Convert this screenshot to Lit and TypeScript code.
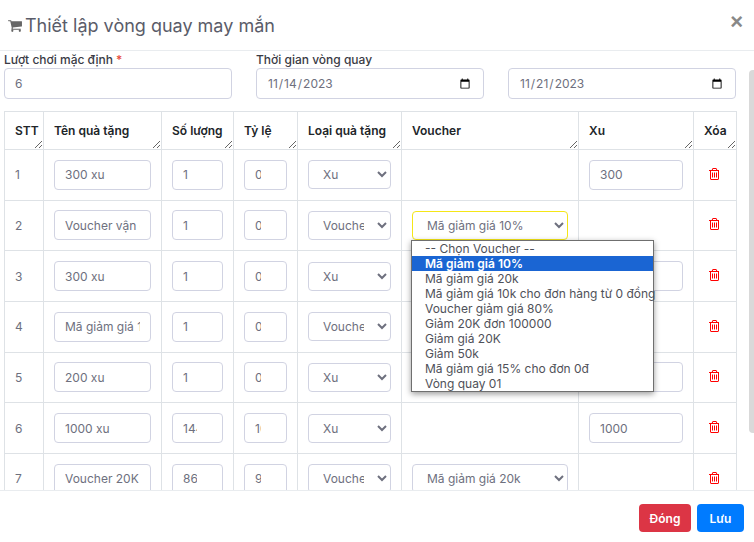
import { LitElement, html, css, svg } from 'lit';
import { customElement } from 'lit/decorators.js';

const cartIcon = html`<svg class="cart" viewBox="0 0 1664 1792" aria-hidden="true"><path fill="currentColor" d="M640 1536q0 52-38 90t-90 38-90-38-38-90 38-90 90-38 90 38 38 90zm896 0q0 52-38 90t-90 38-90-38-38-90 38-90 90-38 90 38 38 90zm128-1088v512q0 24-16.5 42.5t-40.5 21.5l-1044 122q13 60 13 70 0 16-24 64h920q26 0 45 19t19 45-19 45-45 19h-1024q-26 0-45-19t-19-45q0-11 8-31.5t16-36 21.5-40 15.5-29.5l-177-823h-204q-26 0-45-19t-19-45 19-45 45-19h256q16 0 28.5 6.5t19.5 15.5 13 24.5 8 26 5.5 29.5 4.5 26h1201q26 0 45 19t19 45z"/></svg>`;

const trashPath = svg`<path fill="currentColor" d="M704 736v576q0 14-9 23t-23 9h-64q-14 0-23-9t-9-23v-576q0-14 9-23t23-9h64q14 0 23 9t9 23zm256 0v576q0 14-9 23t-23 9h-64q-14 0-23-9t-9-23v-576q0-14 9-23t23-9h64q14 0 23 9t9 23zm256 0v576q0 14-9 23t-23 9h-64q-14 0-23-9t-9-23v-576q0-14 9-23t23-9h64q14 0 23 9t9 23zm128 724v-948h-896v948q0 22 7 40.5t14.5 27 10.5 8.5h832q3 0 10.5-8.5t14.5-27 7-40.5zm-672-1076h448l-48-117q-7-9-17-11h-317q-10 2-17 11zm928 32v64q0 14-9 23t-23 9h-96v948q0 83-47 143.5t-113 60.5h-832q-66 0-113-58.5t-47-141.5v-952h-96q-14 0-23-9t-9-23v-64q0-14 9-23t23-9h309l70-167q15-37 54-63t79-26h320q40 0 79 26t54 63l70 167h309q14 0 23 9t9 23z"/>`;

const vouchers = [
  '-- Chọn Voucher --',
  'Mã giảm giá 10%',
  'Mã giảm giá 20k',
  'Mã giảm giá 10k cho đơn hàng từ 0 đồng',
  'Voucher giảm giá 80%',
  'Giảm 20K đơn 100000',
  'Giảm giá 20K',
  'Giảm 50k',
  'Mã giảm giá 15% cho đơn 0đ',
  'Vòng quay 01',
];

const columns = ['STT', 'Tên quà tặng', 'Số lượng', 'Tỷ lệ', 'Loại quà tặng', 'Voucher', 'Xu', 'Xóa'];

const rows = [
  { name: '300 xu', qty: 1, rate: 0, type: 'Xu', voucher: '', xu: '300' },
  { name: 'Voucher vận chuyển', qty: 1, rate: 0, type: 'Voucher', voucher: 'Mã giảm giá 10%', xu: '', open: true },
  { name: '300 xu', qty: 1, rate: 0, type: 'Xu', voucher: '', xu: '300' },
  { name: 'Mã giảm giá 10k', qty: 1, rate: 0, type: 'Voucher', voucher: 'Mã giảm giá 10k cho đơn hàng từ 0 đồng', xu: '' },
  { name: '200 xu', qty: 1, rate: 0, type: 'Xu', voucher: '', xu: '200' },
  { name: '1000 xu', qty: 144, rate: 10, type: 'Xu', voucher: '', xu: '1000' },
  { name: 'Voucher 20K', qty: 86, rate: 90, type: 'Voucher', voucher: 'Mã giảm giá 20k', xu: '' },
];

@customElement('app-root')
export class AppRoot extends LitElement {
  static override styles = css`
    :host {
      display: block;
      position: relative;
      width: 754px;
      height: 542px;
      overflow: hidden;
      background: #fff;
      font-family: Inter, 'Noto Sans', sans-serif;
      font-size: 12px;
      color: #6e707e;
    }
    .modal {
      display: flex;
      flex-direction: column;
      height: 100%;
    }
    .head {
      display: flex;
      align-items: center;
      justify-content: space-between;
      flex: none;
      height: 51px;
      box-sizing: border-box;
      padding: 0 11px 0 8px;
      border-bottom: 1px solid #e9ecef;
    }
    .title {
      display: flex;
      align-items: center;
      gap: 3px;
      margin: 0;
      font-size: 18px;
      font-weight: 400;
      color: #5a5c69;
    }
    .cart {
      width: 14px;
      height: 15px;
      color: #666;
    }
    .close {
      border: 0;
      padding: 0;
      background: none;
      font-family: 'Liberation Sans', sans-serif;
      font-size: 22px;
      font-weight: 700;
      line-height: 1;
      color: #888;
      margin-top: -6px;
    }
    .body {
      flex: 1;
      min-height: 0;
      overflow: hidden;
      padding: 0 18px 0 4px;
    }
    .fields {
      display: grid;
      grid-template-columns: repeat(3, 228px);
      column-gap: 24px;
      align-items: end;
      margin-bottom: 12px;
    }
    label {
      display: block;
      height: 17px;
      font-weight: 500;
      line-height: 17px;
      color: #3a3b45;
    }
    .req {
      color: #e74a3b;
    }
    input,
    select {
      box-sizing: border-box;
      width: 100%;
      height: 30px;
      border: 1px solid #d1d3e2;
      border-radius: 4px;
      background: #fff;
      font: inherit;
      color: #6e707e;
      padding: 0 10px;
      outline: none;
    }
    .fields input {
      height: 31px;
    }
    select {
      height: 29px;
      padding: 0 10px;
      vertical-align: bottom;
    }
    select.focus {
      border-color: #f5e617;
    }
    table {
      width: 732px;
      table-layout: fixed;
      border-collapse: collapse;
    }
    .c0 { width: 39px; }
    .c1 { width: 118px; }
    .c2 { width: 72px; }
    .c3 { width: 64px; }
    .c4 { width: 104px; }
    .c5 { width: 177px; }
    .c6 { width: 115px; }
    .c7 { width: 43px; }
    th,
    td {
      border: 1px solid #dee2e6;
      padding: 0 10px;
      text-align: left;
    }
    th {
      height: 37px;
      font-weight: 600;
      color: #212529;
      overflow: auto;
      resize: both;
    }
    td {
      height: 50.67px;
      box-sizing: border-box;
      color: #6e707e;
    }
    .voucher {
      position: relative;
    }
    .trash {
      display: block;
      width: 12px;
      height: 14px;
      margin: 0 0 2px 3px;
      color: #f00;
    }
    .menu {
      position: absolute;
      z-index: 2;
      left: 9px;
      top: 39px;
      box-sizing: border-box;
      width: 243px;
      border: 1px solid #6f6f6f;
      background: #fff;
      box-shadow: 0 2px 6px rgba(0, 0, 0, 0.4);
      color: #4f5159;
      line-height: 15px;
      white-space: nowrap;
    }
    .menu div {
      height: 15px;
      padding-left: 13px;
    }
    .menu .sel {
      background: #1a65d3;
      color: #fff;
      font-weight: 600;
    }
    .thumb {
      position: absolute;
      right: 0;
      top: 70px;
      width: 5px;
      height: 363px;
      border-radius: 4px 0 0 4px;
      background: #d9d9d9;
    }
    .foot {
      display: flex;
      flex: none;
      justify-content: flex-end;
      gap: 6px;
      height: 52px;
      box-sizing: border-box;
      padding: 13px 10px 0 0;
      border-top: 1px solid #e9ecef;
      background: #fff;
    }
    .btn {
      height: 28px;
      border: 0;
      border-radius: 4px;
      font: inherit;
      font-weight: 600;
      color: #fff;
    }
    .close-btn {
      width: 52px;
      background: #dc3545;
    }
    .save-btn {
      width: 47px;
      background: #007bff;
    }
  `;

  private renderSelect(value: string, options: string[], focus = false) {
    return html`<select class=${focus ? 'focus' : ''}>
      ${options.map((o) => html`<option ?selected=${o === value}>${o}</option>`)}
    </select>`;
  }

  override render() {
    return html`
      <div class="modal">
        <header class="head">
          <h5 class="title">${cartIcon}Thiết lập vòng quay may mắn</h5>
          <button class="close">×</button>
        </header>
        <div class="body">
          <div class="fields">
            <div>
              <label>Lượt chơi mặc định <span class="req">*</span></label>
              <input type="number" value="6" />
            </div>
            <div>
              <label>Thời gian vòng quay</label>
              <input type="date" value="2023-11-14" />
            </div>
            <div>
              <input type="date" value="2023-11-21" />
            </div>
          </div>
          <table>
            <colgroup>
              ${columns.map((_, i) => html`<col class="c${i}" />`)}
            </colgroup>
            <thead>
              <tr>${columns.map((c) => html`<th>${c}</th>`)}</tr>
            </thead>
            <tbody>
              ${rows.map(
                (r, i) => html`
                  <tr>
                    <td>${i + 1}</td>
                    <td><input type="text" value=${r.name} /></td>
                    <td><input type="number" value=${r.qty} /></td>
                    <td><input type="number" value=${r.rate} /></td>
                    <td>${this.renderSelect(r.type, ['Xu', 'Voucher'])}</td>
                    <td class="voucher">
                      ${r.voucher ? this.renderSelect(r.voucher, vouchers, r.open) : ''}
                      ${r.open
                        ? html`<div class="menu">
                            ${vouchers.map(
                              (v) => html`<div class=${v === r.voucher ? 'sel' : ''}>${v}</div>`
                            )}
                          </div>`
                        : ''}
                    </td>
                    <td>${r.xu ? html`<input type="number" value=${r.xu} />` : ''}</td>
                    <td><svg class="trash" viewBox="0 0 1408 1792" aria-hidden="true">${trashPath}</svg></td>
                  </tr>
                `
              )}
            </tbody>
          </table>
        </div>
        <footer class="foot">
          <button class="btn close-btn">Đóng</button>
          <button class="btn save-btn">Lưu</button>
        </footer>
      </div>
      <div class="thumb"></div>
    `;
  }
}
